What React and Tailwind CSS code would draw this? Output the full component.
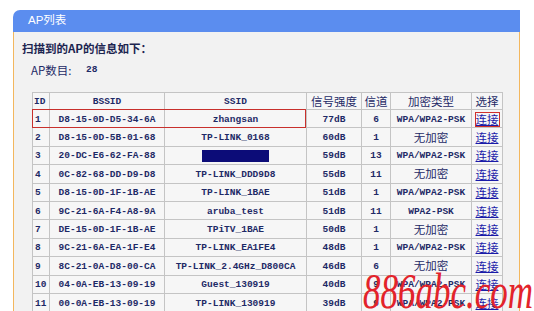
import React from "react";

const rows = [
  ["1", "D8-15-0D-D5-34-6A", "zhangsan", "77dB", "6", "WPA/WPA2-PSK"],
  ["2", "D8-15-0D-5B-01-68", "TP-LINK_0168", "60dB", "1", "无加密"],
  ["3", "20-DC-E6-62-FA-88", null, "59dB", "13", "WPA/WPA2-PSK"],
  ["4", "0C-82-68-DD-D9-D8", "TP-LINK_DDD9D8", "55dB", "11", "无加密"],
  ["5", "D8-15-0D-1F-1B-AE", "TP-LINK_1BAE", "51dB", "1", "WPA/WPA2-PSK"],
  ["6", "9C-21-6A-F4-A8-9A", "aruba_test", "51dB", "11", "WPA2-PSK"],
  ["7", "DE-15-0D-1F-1B-AE", "TPiTV_1BAE", "50dB", "1", "无加密"],
  ["8", "9C-21-6A-EA-1F-E4", "TP-LINK_EA1FE4", "48dB", "1", "WPA/WPA2-PSK"],
  ["9", "8C-21-0A-D8-00-CA", "TP-LINK_2.4GHz_D800CA", "46dB", "6", "无加密"],
  ["10", "04-0A-EB-13-09-19", "Guest_130919", "40dB", "9", "WPA/WPA2-PSK"],
  ["11", "00-0A-EB-13-09-19", "TP-LINK_130919", "39dB", "9", "WPA/WPA2-PSK"],
];

const mono = "font-['Liberation_Mono','Noto_Sans_CJK_SC',monospace] text-[9.5px] font-bold leading-[12px]";
const cjk = "font-['Noto_Sans_CJK_SC',sans-serif] text-[11.5px] leading-[12px]";
const cell = "border border-[#c4c4c4] bg-[#f6f6f6] p-0 h-[18.4px] text-[10px] leading-[12px] align-middle";

export default function App() {
  return (
    <div className="relative w-[534px] h-[311px] overflow-hidden bg-white pl-[13px] pt-[10px] text-[#1e2a66]">
      <div className="flex h-[320px] w-[507px] flex-col">
        <div className="flex h-[22px] items-center rounded-tl-[7px] bg-[#5b8def] pl-[15px] font-['Liberation_Sans','Noto_Sans_CJK_SC',sans-serif] text-[11.5px] text-white">
          AP列表
        </div>
        <div className="flex-1 border-x border-[#f3b75e] bg-[#f2f2f2] pl-[8px] pt-[9px]">
          <div className="font-['Noto_Sans_CJK_SC',sans-serif] text-[11.5px] font-bold leading-[14px] text-[#1c2550]">
            扫描到的AP的信息如下：
          </div>
          <div className="mt-[8px] ml-[9px] flex items-center font-['Noto_Sans_CJK_SC',sans-serif] text-[11.5px] leading-[14px]">
            <span className="w-[55px]">AP数目:</span>
            <span className={mono}>28</span>
          </div>
          <div className="relative mt-[15px] ml-[10px] w-[470px]">
            <table className="w-[470px] table-fixed border-collapse">
              <colgroup>
                <col className="w-[17px]" />
                <col className="w-[115px]" />
                <col className="w-[142px]" />
                <col className="w-[55px]" />
                <col className="w-[29px]" />
                <col className="w-[81px]" />
                <col className="w-[31px]" />
              </colgroup>
              <thead>
                <tr>
                  <th className={`${cell} !h-[17px] pl-[1px] text-left font-normal`}><span className={mono}>ID</span></th>
                  <th className={`${cell} !h-[17px] text-center font-normal`}><span className={mono}>BSSID</span></th>
                  <th className={`${cell} !h-[17px] text-center font-normal`}><span className={mono}>SSID</span></th>
                  <th className={`${cell} !h-[17px] text-center font-normal`}><span className={cjk}>信号强度</span></th>
                  <th className={`${cell} !h-[17px] text-center font-normal`}><span className={cjk}>信道</span></th>
                  <th className={`${cell} !h-[17px] text-center font-normal`}><span className={cjk}>加密类型</span></th>
                  <th className={`${cell} !h-[17px] text-center font-normal`}><span className={cjk}>选择</span></th>
                </tr>
              </thead>
              <tbody>
                {rows.map((r, i) => (
                  <tr key={r[0]}>
                    <td className={`${cell} pl-[2px] text-left`}><span className={mono}>{r[0]}</span></td>
                    <td className={`${cell} text-center`}><span className={mono}>{r[1]}</span></td>
                    <td className={`${cell} text-center whitespace-nowrap`}>
                      {r[2] === null ? (
                        <span className="inline-block h-[12px] w-[67px] bg-[#0c0c78] align-middle" />
                      ) : (
                        <span className={mono}>{r[2]}</span>
                      )}
                    </td>
                    <td className={`${cell} text-center`}><span className={mono}>{r[3]}</span></td>
                    <td className={`${cell} text-center`}><span className={mono}>{r[4]}</span></td>
                    <td className={`${cell} text-center`}>
                      <span className={r[5] === "无加密" ? cjk : mono}>{r[5]}</span>
                    </td>
                    <td className={`${cell} text-center`}>
                      <a
                        href="#"
                        className={`${cjk} inline-block align-middle leading-[13px] text-[#1a1aa8] underline ${i === 0 ? "outline outline-1 outline-[#d0302c]" : ""}`}
                      >
                        连接
                      </a>
                    </td>
                  </tr>
                ))}
              </tbody>
            </table>
            <div className="pointer-events-none absolute left-0 top-[17px] h-[19px] w-[274px] border-[1.5px] border-[#c8302c]" />
          </div>
        </div>
      </div>
      <div className="pointer-events-none absolute left-[363px] top-[261px] origin-left scale-x-[0.7] whitespace-nowrap font-['Liberation_Serif',serif] text-[50px] italic leading-[60px] text-[#e3232a]">
        886abc.com
      </div>
    </div>
  );
}
